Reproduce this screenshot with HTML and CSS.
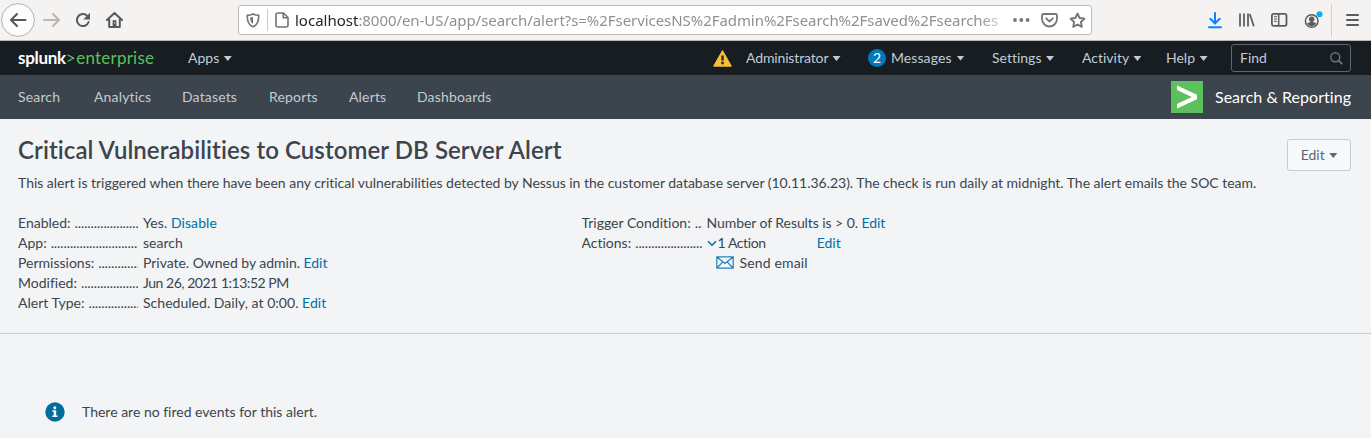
FILE: index.html
```html
<!DOCTYPE html>
<html lang="en">
<head>
<meta charset="utf-8">
<title>Critical Vulnerabilities to Customer DB Server Alert</title>
<link rel="stylesheet" href="styles.css">
</head>
<body>
<header class="browser">
  <div class="nav-buttons">
    <span class="back"><svg width="34" height="34" viewBox="0 0 34 34"><circle cx="17" cy="17" r="16.4" fill="#fcfcfc" stroke="#b1b0ae"/><path d="M24.5 17H10.5M16 11l-6 6 6 6" fill="none" stroke="#58585a" stroke-width="2.1" stroke-linecap="round" stroke-linejoin="round"/></svg></span>
    <svg class="forward" width="18" height="16" viewBox="0 0 18 16"><path d="M1 8h14.5M10 2l6 6-6 6" fill="none" stroke="#b9b8b7" stroke-width="2.1" stroke-linecap="round" stroke-linejoin="round"/></svg>
    <svg class="reload" width="16" height="16" viewBox="0 0 16 16"><path d="M12.8 4.6A6 6 0 1 0 13.6 10" fill="none" stroke="#59595a" stroke-width="2" stroke-linecap="round"/><path d="M15 .8v6.7H8.3z" fill="#59595a"/></svg>
    <svg class="home" width="17" height="16" viewBox="0 0 17 16"><path d="M1 8l7.5-7L16 8M3.2 7v8h10.6V7" fill="none" stroke="#59595a" stroke-width="2" stroke-linecap="round" stroke-linejoin="round"/><path d="M6.6 8.2h3.8V15H6.6z" fill="#59595a"/><path d="M8.3 10.2h1v1.3h-1z" fill="#f4f3f2"/></svg>
  </div>
  <div class="address">
    <svg width="14" height="15" viewBox="0 0 14 15"><path d="M7 1C5 2 3 2.3 1.3 2.3c-.2 5.500.8 9.500 5.700 11.500 4.900-2 5.900-6 5.700-11.500C11 2.300 9 2 7 1z" fill="none" stroke="#77777a" stroke-width="1.700"/><path d="M7 3.800c-1 .5-2 .7-3 .8.1 3.200.9 5.200 3 6.400z" fill="#77777a"/></svg>
    <span class="divider"></span>
    <svg class="doc" width="14" height="16" viewBox="0 0 14 16"><path d="M3 1h5.500L13 5.500V13a2 2 0 0 1-2 2H3a2 2 0 0 1-2-2V3a2 2 0 0 1 2-2zM8.300 1.200v4.600H13" fill="none" stroke="#747476" stroke-width="1.600"/></svg>
    <div class="url"><b>localhost</b>:8000/en-US/app/search/alert?s=%2FservicesNS%2Fadmin%2Fsearch%2Fsaved%2Fsearches</div>
    <svg class="dots" width="17" height="4" viewBox="0 0 17 4"><g fill="#77777a"><circle cx="2" cy="2" r="1.900"/><circle cx="8.300" cy="2" r="1.900"/><circle cx="14.600" cy="2" r="1.900"/></g></svg>
    <svg class="pocket" width="17" height="15" viewBox="0 0 17 15"><path d="M2.500 1h12A1.500 1.500 0 0 1 16 2.500V6c0 4-3.500 7.500-7.500 7.500S1 10 1 6V2.500A1.500 1.500 0 0 1 2.500 1z" fill="none" stroke="#77777a" stroke-width="1.800"/><path d="M5.200 5.300l3.300 3.200 3.300-3.200" fill="none" stroke="#77777a" stroke-width="1.800" stroke-linecap="round" stroke-linejoin="round"/></svg>
    <svg class="star" width="17" height="17" viewBox="0 0 17 17"><path d="M8.500 1.500l2.100 4.500 4.900.6-3.600 3.400.9 4.900-4.300-2.400-4.300 2.400.9-4.900L1.500 6.600 6.400 6z" fill="none" stroke="#737375" stroke-width="1.800" stroke-linejoin="round"/></svg>
  </div>
  <div class="tools">
    <svg width="14" height="17" viewBox="0 0 14 17"><path d="M7 1v10M2.300 6.800L7 11.500l4.700-4.700M1 15.200h12" fill="none" stroke="#0a84ff" stroke-width="2" stroke-linecap="round" stroke-linejoin="round"/></svg>
    <svg class="library" width="16" height="14" viewBox="0 0 16 14"><path d="M1 .5v13M5 .5v13M9 .5v13M10.800 1l4 12.300" fill="none" stroke="#616162" stroke-width="1.800"/></svg>
    <svg class="sidebar" width="17" height="14" viewBox="0 0 17 14"><rect x=".9" y=".9" width="14.600" height="12" rx="1.800" fill="none" stroke="#5d5d5f" stroke-width="1.800"/><path d="M7.700 1v12" stroke="#5d5d5f" stroke-width="1.500"/><path d="M3 3.700h3M3 6h3M3 8.300h3" stroke="#5d5d5f"/></svg>
    <svg class="account" width="19" height="18" viewBox="0 0 19 18"><circle cx="7.700" cy="10" r="6.300" fill="none" stroke="#5d5d5f" stroke-width="1.500"/><circle cx="7.700" cy="8.200" r="2.700" fill="#5d5d5f"/><path d="M3.200 12.500c2-2 7-2 9 0-1 1.800-2.700 2.800-4.500 2.800s-3.500-1-4.500-2.800z" fill="#5d5d5f"/><circle cx="15.500" cy="3.200" r="3" fill="#00b3f4"/></svg>
    <span class="separator"></span>
    <svg class="menu" width="13" height="12" viewBox="0 0 13 12"><path d="M1 1h11M1 6h11M1 11h11" stroke="#5b5b5c" stroke-width="2" stroke-linecap="round"/></svg>
  </div>
</header>

<div class="topbar">
  <div class="brand"><b>splunk</b><span class="gt">&gt;</span><span class="product">enterprise</span></div>
  <div class="apps">Apps <i class="caret"></i></div>
  <div class="menus">
    <svg width="19" height="17" viewBox="0 0 19 17"><path d="M9.500 1L18 16H1z" fill="#f8be34" stroke="#f8be34" stroke-width="1.500" stroke-linejoin="round"/><path d="M9.500 5.500v5" stroke="#252a2f" stroke-width="2.400"/><circle cx="9.500" cy="13" r="1.400" fill="#252a2f"/></svg>
    <div class="m-admin">Administrator <i class="caret"></i></div>
    <div class="m-messages"><span class="badge">2</span>Messages <i class="caret"></i></div>
    <div class="m-settings">Settings <i class="caret"></i></div>
    <div class="m-activity">Activity <i class="caret"></i></div>
    <div class="m-help">Help <i class="caret"></i></div>
    <div class="find">Find<svg width="13" height="13" viewBox="0 0 13 13"><circle cx="5.300" cy="5.300" r="4.500" fill="none" stroke="#6b7785" stroke-width="1.400"/><path d="M8.500 8.500l3.700 3.700" stroke="#6b7785" stroke-width="1.800"/></svg></div>
  </div>
</div>

<nav class="appbar">
  <div class="views"><a>Search</a><a>Analytics</a><a>Datasets</a><a>Reports</a><a>Alerts</a><a>Dashboards</a></div>
  <div class="app-name">
    <svg width="32" height="32" viewBox="0 0 32 32"><path d="M0 0h32v32H0z" fill="#5cc05c"/><path d="M6 4.500l20 9.200v4.600L6 27.500v-4.600L20.800 16 6 9.100z" fill="#fff"/></svg>
    <span>Search &amp; Reporting</span>
  </div>
</nav>

<main>
  <section class="summary">
    <div class="heading"><h1>Critical Vulnerabilities to Customer DB Server Alert</h1><button class="edit">Edit <i class="caret"></i></button></div>
    <p class="description">This alert is triggered when there have been any critical vulnerabilities detected by Nessus in the customer database server (10.11.36.23). The check is run daily at midnight. The alert emails the SOC team.</p>
    <div class="details">
      <dl>
        <dt>Enabled:</dt><dd class="v-yes">Yes. <a>Disable</a></dd>
        <dt>App:</dt><dd>search</dd>
        <dt>Permissions:</dt><dd class="v-perm">Private. Owned by admin. <a>Edit</a></dd>
        <dt>Modified:</dt><dd class="v-mod">Jun 26, 2021 1:13:52 PM</dd>
        <dt>Alert Type:</dt><dd class="v-type">Scheduled. Daily, at 0:00. <a>Edit</a></dd>
      </dl>
      <dl class="right">
        <dt>Trigger Condition:</dt><dd class="v-trigger">Number of Results is &gt; 0. <a>Edit</a></dd>
        <dt>Actions:</dt>
        <dd class="actions"><svg width="10" height="7" viewBox="0 0 10 7"><path d="M1 1.200l4 4 4-4" fill="none" stroke="#006eaa" stroke-width="1.500"/></svg><span class="action-count">1 Action</span><a>Edit</a></dd>
        <dd class="email"><svg width="18" height="13" viewBox="0 0 18 13"><path d="M.8.8h16.400v11.400H.8zM1 1l8 6.500L17 1M1 12l5.800-6.200M17 12l-5.800-6.200" fill="none" stroke="#2583b8" stroke-width="1.200"/></svg><span>Send email</span></dd>
      </dl>
    </div>
  </section>
  <section class="notice">
    <svg width="20" height="20" viewBox="0 0 20 20"><circle cx="10" cy="10" r="9.700" fill="#006d9c"/><circle cx="9.800" cy="5.800" r="1.500" fill="#fff"/><path d="M7.400 8.300h3.800v5.200h1.300V15H7.400v-1.500h1.300V9.800H7.400z" fill="#fff"/></svg>
    <span>There are no fired events for this alert.</span>
  </section>
</main>
</body>
</html>
```
FILE: styles.css
```css
* { box-sizing: border-box; }
body { margin: 0; height: 438px; overflow: hidden; background: #f2f4f5; color: #3c444d; font: 14px/20px Lato, "Open Sans", sans-serif; font-variant-ligatures: none; white-space: nowrap; }
svg { display: block; flex: none; }
a { color: #006eaa; }

.browser { height: 41px; display: flex; align-items: center; background: #f4f3f2; border-bottom: 1px solid #b9b7b4; }
.nav-buttons { display: flex; align-items: center; width: 238px; padding-left: 1px; }
.forward { margin-left: 8px; }
.reload { margin-left: 14px; }
.home { margin-left: 15px; }
.address { width: 854px; height: 30px; display: flex; align-items: center; padding: 0 5px 0 7px; background: #fff; border: 1px solid #bebbb8; border-radius: 3px; }
.divider { flex: none; width: 1px; height: 22px; background: #c9c9ca; margin: 0 7px; }
.url { flex: none; width: 712px; margin-left: 6px; overflow: hidden; color: #909092; font: 15px/20px "Noto Sans", sans-serif; letter-spacing: -.06px; -webkit-mask-image: linear-gradient(to right, #000 685px, transparent 716px); mask-image: linear-gradient(to right, #000 685px, transparent 716px); }
.url b { font-weight: 400; color: #242424; letter-spacing: 0; }
.dots { margin-left: 6px; }
.pocket { margin-left: 11px; }
.star { margin-left: 11px; }
.tools { flex: 1; display: grid; grid-template-columns: 31px 32px 33px 27px 15px 13px; align-items: center; padding-left: 116px; }
.separator { width: 1px; height: 33px; background: #d3d1cf; }

.topbar { height: 34px; display: flex; align-items: center; padding: 0 20px 0 18px; background: #171d21; color: #c3cbd4; }
.brand { width: 170px; font-size: 17px; color: #5cc05c; }
.brand b { color: #fff; font-weight: 700; letter-spacing: -.3px; }
.gt { letter-spacing: .6px; }
.product { letter-spacing: .22px; }
.caret { display: inline-block; width: 8px; height: 5px; margin-left: 1px; vertical-align: 2px; background: currentColor; clip-path: polygon(0 0, 100% 0, 50% 100%); }
.menus { margin-left: auto; display: grid; grid-template-columns: 33px 122px 124px 90px 84px 65px 120px; align-items: center; }
.m-admin { letter-spacing: -.14px; }
.m-messages { display: flex; align-items: center; letter-spacing: .08px; }
.m-messages .caret { margin-left: 5px; }
.badge { width: 18px; height: 18px; margin-right: 5px; border-radius: 9px; background: #007abd; color: #fff; line-height: 18px; text-align: center; }
.find { height: 28px; display: flex; align-items: center; justify-content: space-between; padding: 0 7px 0 8px; border: 1px solid #5c6773; border-radius: 3px; }

.appbar { height: 44px; display: flex; align-items: center; justify-content: space-between; padding: 0 20px 0 18px; background: #3c444d; color: #c3cbd4; }
.appbar a { color: inherit; letter-spacing: .16px; }
.views { display: grid; grid-template-columns: 76px 88px 87px 80px 68px 80px; }
.app-name { display: flex; align-items: center; gap: 12px; color: #fff; font-size: 16px; letter-spacing: .04px; }

.summary { height: 215px; padding: 17px 20px 0 18px; border-bottom: 1px solid #c3cbd4; }
.heading { display: flex; justify-content: space-between; height: 36px; }
h1 { margin: 0; font-size: 24px; line-height: 28px; font-weight: 600; letter-spacing: .075px; }
.edit { width: 64px; height: 32px; margin-top: 3px; padding: 0; border: 1px solid #c3cbd4; border-radius: 3px; background: #f7f8fa; color: #5c6773; font: inherit; }
.description { margin: 1px 0 20px; letter-spacing: -.022px; }
.details { display: grid; grid-template-columns: 563.5px 1fr; }
dl { margin: 0; display: grid; grid-template-columns: 120px 1fr; grid-auto-rows: 20px; column-gap: 5px; align-content: start; }
dt { overflow: hidden; display: flex; }
dt::after { content: "................................................"; margin-left: 4px; flex: 1; overflow: hidden; letter-spacing: -.1px; }
dd { margin: 0; }
.v-yes { letter-spacing: .08px; }
.v-perm { letter-spacing: -.03px; }
.v-mod { letter-spacing: -.47px; }
.v-type { letter-spacing: .03px; }
.v-trigger { letter-spacing: -.07px; }
.actions, .email { display: flex; align-items: center; }
.actions a { margin-left: 51px; }
.action-count { margin-left: 1px; letter-spacing: -.4px; }
.email { grid-column: 2; padding-left: 9px; gap: 6px; }
.email svg { margin-top: -2px; }
.email span { letter-spacing: .16px; }
.notice { display: flex; align-items: center; gap: 17px; padding: 68px 0 0 45px; }
```
